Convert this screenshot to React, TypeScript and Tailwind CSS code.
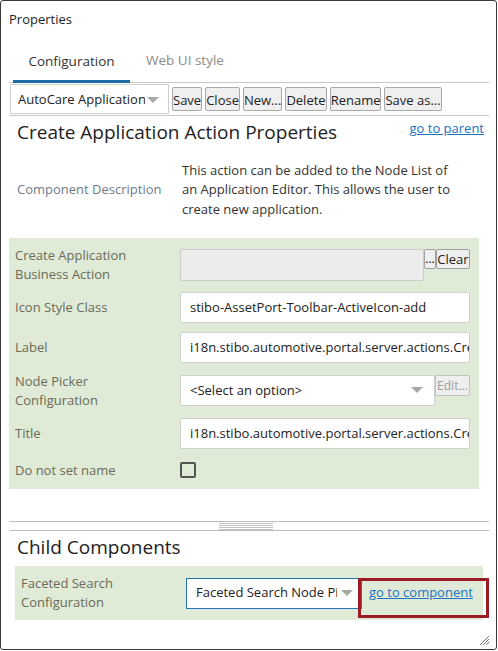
import React from 'react';

const font = { fontFamily: '"Open Sans", "Noto Sans", sans-serif' };

function ToolButton({ label }: { label: string }) {
  return (
    <button className="mt-[3px] h-[24px] px-0 pt-[2px] border border-[#a9a9a9] rounded-[2px] text-[13px] leading-[20px] bg-[#efefef] text-[#222]">
      {label}
    </button>
  );
}

function Caret({ className }: { className?: string }) {
  return (
    <svg width="12" height="7" viewBox="0 0 12 7" className={className}>
      <path d="M0 0 L12 0 L6 6 Z" fill="#a8a8a8" />
    </svg>
  );
}

function TextField({ value }: { value: string }) {
  return (
    <div className="h-[31px] w-[290px] bg-white border border-[#cfcfcf] rounded-[2px] flex items-center pl-[9px] overflow-hidden whitespace-nowrap text-[13px] text-[#222]">
      {value}
    </div>
  );
}

function Row({ label, h, ih, children }: { label: React.ReactNode; h: string; ih: string; children: React.ReactNode }) {
  return (
    <div className={h}>
      <div className={'flex items-center ' + ih}>
        <div className="w-[165px] text-[13px] leading-[19px] text-[#6b6a58]">{label}</div>
        {children}
      </div>
    </div>
  );
}

export default function App() {
  return (
    <div
      style={font}
      className="w-[497px] h-[650px] border border-[#3a3a3a] rounded-[3px] bg-white flex flex-col px-[8px] relative overflow-hidden"
    >
      <div className="h-[38px] pt-[9px] text-[13px] text-[#222]">Properties</div>

      {/* tabs */}
      <div className="flex items-end h-[44px] border-b border-[#c8c8c8] mr-[-1px]">
        <div className="ml-[4px] w-[117px] h-[36px] border-b-[3px] border-[#1d6aa5] mb-[-1px] flex items-start justify-center pt-[4px] text-[13.5px] text-[#333]">
          Configuration
        </div>
        <div className="ml-[16px] h-[36px] pt-[4px] text-[13.5px] text-[#8a8a8a]">Web UI style</div>
      </div>

      {/* toolbar */}
      <div className="h-[33px] border-b border-[#c8c8c8] mr-[-1px] flex items-start pt-[1px] gap-[3px] pl-[1px]">
        <div className="w-[159px] h-[30px] border border-[#cfcfcf] bg-white flex items-center pl-[7px] pr-[8px] pt-[2px] text-[13px] text-[#222]">
          <span className="overflow-hidden whitespace-nowrap w-[127px]">AutoCare Application Editor</span>
          <Caret className="ml-[2px] shrink-0" />
        </div>
        <ToolButton label="Save" />
        <ToolButton label="Close" />
        <ToolButton label="New..." />
        <ToolButton label="Delete" />
        <ToolButton label="Rename" />
        <ToolButton label="Save as..." />
      </div>

      {/* content */}
      <div className="w-[470px]">
        <div className="flex items-start justify-between pl-[8px] pt-[4px] h-[40px] w-[475px]">
          <div className="text-[19px] leading-[24px] text-[#222]">Create Application Action Properties</div>
          <a className="text-[13px] text-[#1a73c4] underline mt-[-1px]">go to parent</a>
        </div>
        <div className="flex items-center pl-[8px] h-[82px] pb-[14px]">
          <div className="w-[165px] text-[13px] text-[#707b86]">Component Description</div>
          <div className="w-[284px] text-[13px] leading-[19.5px] text-[#333]">
            This action can be added to the Node List of an Application Editor. This allows the user to create new
            application.
          </div>
        </div>

        <div className="bg-[#dfead7] pl-[6px] pt-[11px] h-[251px]">
          <Row label={<>Create Application<br />Business Action</>} h="h-[43px]" ih="h-[32px]">
            <div className="flex items-start self-start">
              <div className="w-[244px] h-[32px] bg-[#ececec] border border-[#cbcbcb] rounded-[2px]" />
              <button className="h-[20px] w-[12px] border border-[#a0a0a0] bg-[#efefef] text-[12px] leading-none rounded-[2px]">
                ...
              </button>
              <button className="h-[20px] w-[34px] border border-[#a0a0a0] bg-[#efefef] text-[13px] leading-none rounded-[2px] text-[#222]">
                Clear
              </button>
            </div>
          </Row>
          <Row label="Icon Style Class" h="h-[40px]" ih="h-[31px]">
            <TextField value="stibo-AssetPort-Toolbar-ActiveIcon-add" />
          </Row>
          <Row label="Label" h="h-[43px]" ih="h-[31px]">
            <TextField value="i18n.stibo.automotive.portal.server.actions.CreateApplication" />
          </Row>
          <Row label={<>Node Picker<br />Configuration</>} h="h-[43px]" ih="h-[31px]">
            <div className="flex items-start self-start">
              <div className="w-[255px] h-[31px] bg-white border border-[#cfcfcf] rounded-[2px] flex items-center justify-between pl-[9px] pr-[11px] text-[13px] text-[#222]">
                <span>&lt;Select an option&gt;</span>
                <Caret />
              </div>
              <button className="h-[21px] w-[35px] border border-[#c2c2c2] bg-[#efefef] text-[12px] leading-none text-[#9c9c9c] rounded-[2px]">
                Edit...
              </button>
            </div>
          </Row>
          <Row label="Title" h="h-[44px]" ih="h-[31px]">
            <TextField value="i18n.stibo.automotive.portal.server.actions.CreateApplication" />
          </Row>
          <Row label="Do not set name" h="h-[16px]" ih="h-[16px]">
            <div className="w-[16px] h-[16px] border-2 border-[#555] rounded-[2px] bg-transparent" />
          </Row>
        </div>
      </div>

      {/* splitter */}
      <div className="mt-[32px] mr-[-1px] h-[10px] border-t border-b border-[#bdbdbd] flex justify-center">
        <div className="w-[54px] flex flex-col gap-[1px] pt-[1px] ml-[-6px]">
          <div className="h-px bg-[#c4c4c4]" />
          <div className="h-px bg-[#c4c4c4]" />
          <div className="h-px bg-[#c4c4c4]" />
          <div className="h-px bg-[#c4c4c4]" />
        </div>
      </div>

      <div className="pl-[8px] h-[35px] flex items-center pb-[3px] text-[19px] text-[#222]">Child Components</div>

      <div className="ml-[6px] w-[468px] h-[54px] bg-[#dfead7] flex items-center pl-[6px]">
        <div className="w-[165px] text-[13px] leading-[19px] text-[#6b6a58]">
          Faceted Search
          <br />
          Configuration
        </div>
        <div className="w-[176px] h-[31px] border border-[#2276b8] bg-white flex items-center pl-[9px] pr-[5px] text-[13px] text-[#222]">
          <span className="overflow-hidden whitespace-nowrap w-[141px]">Faceted Search Node Picker</span>
          <Caret className="ml-[4px] shrink-0" />
        </div>
        <a className="ml-[7px] text-[13px] text-[#1a73c4] underline whitespace-nowrap">go to component</a>
      </div>

      {/* highlight annotation */}
      <div className="absolute left-[357px] top-[577px] w-[131px] h-[40px] border-[3px] border-[#9c1b24]" />

      {/* resize grip */}
      <svg className="absolute left-[477px] top-[633px]" width="12" height="12" viewBox="0 0 12 12">
        <path d="M11 2 L2 11 M11 5 L5 11 M11 8 L8 11" stroke="#777" strokeWidth="1" />
      </svg>
    </div>
  );
}
